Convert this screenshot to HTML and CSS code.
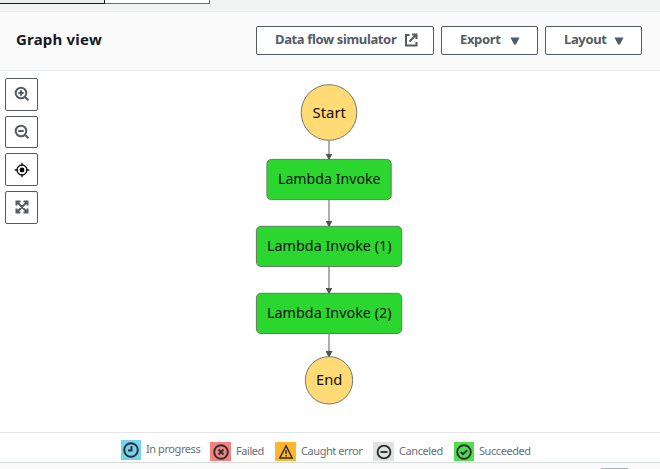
FILE: index.html
```html
<!DOCTYPE html>
<html lang="en">
<head>
<meta charset="utf-8">
<title>Graph view</title>
<link rel="stylesheet" href="styles.css">
</head>
<body>
<div class="tabs"><span class="tab tab-active"></span><span class="tab"></span></div>
<header class="header">
  <h2 class="title">Graph view</h2>
  <div class="actions">
    <button class="btn btn-wide"><span>Data flow simulator</span>
      <svg width="14" height="14" viewBox="0 0 14 14" fill="none" stroke="#545b64" stroke-width="2"><path d="M5.500 2H2v10.500h10.500V9M8 1.500h4.500V6M12.500 1.500 5.500 8.500"/></svg>
    </button>
    <button class="btn"><span>Export</span><svg class="caret" width="10" height="8" viewBox="0 0 10 8"><path d="M.5 .5h9L6 7.500H4z" fill="#545b64"/></svg></button>
    <button class="btn"><span>Layout</span><svg class="caret" width="10" height="8" viewBox="0 0 10 8"><path d="M.5 .5h9L6 7.500H4z" fill="#545b64"/></svg></button>
  </div>
</header>
<main class="canvas">
  <div class="tools">
    <button class="tool"><svg width="16" height="16" viewBox="0 0 16 16" fill="none" stroke="#545b64" stroke-width="2"><circle cx="7" cy="7" r="5.300"/><path d="m10.700 10.700 3.800 3.600M4.300 7h5.400M7 4.300v5.400"/></svg></button>
    <button class="tool"><svg width="16" height="16" viewBox="0 0 16 16" fill="none" stroke="#545b64" stroke-width="2"><circle cx="7" cy="7" r="5.300"/><path d="m10.700 10.700 3.800 3.600M4.300 7h5.400"/></svg></button>
    <button class="tool"><svg width="16" height="16" viewBox="0 0 16 16" fill="none" stroke="#111" stroke-width="1.300"><circle cx="8" cy="8" r="5"/><circle cx="8" cy="8" r="2.400" fill="#000" stroke="none"/><path d="M8 .7V4M8 12v3.300M.7 8H4M12 8h3.300"/></svg></button>
    <button class="tool"><svg width="14" height="14" viewBox="0 0 14 14" fill="none" stroke="#545b64" stroke-width="2"><path d="M5.500 1.500h-4v4M8.500 1.500h4v4M5.500 12.500h-4v-4M8.500 12.500h4v-4M1.500 1.500l11 11M12.500 1.500l-11 11"/></svg></button>
  </div>
  <svg class="graph" width="160" height="340" viewBox="249 80 160 340">
    <defs><marker id="arrow" viewBox="0 0 7 7" refX="6.500" refY="3.500" markerWidth="7" markerHeight="7" markerUnits="userSpaceOnUse" orient="auto"><path d="M0 0 7 3.500 0 7z" fill="#545454"/></marker></defs>
    <g class="edges">
      <path d="M329 141v19"/><path d="M329 200v27"/><path d="M329 267v27"/><path d="M329 334v23.500"/>
    </g>
    <g class="terminal"><circle cx="329" cy="112.500" r="27.800"/><circle cx="329" cy="380.300" r="23.700"/></g>
    <g class="state">
      <rect x="266.900" y="159.400" width="124.300" height="40.200" rx="4.500"/>
      <rect x="256.400" y="226.300" width="145.300" height="40.200" rx="4.500"/>
      <rect x="256.400" y="293.300" width="145.300" height="40.200" rx="4.500"/>
    </g>
    <g class="names">
      <text x="312.500" y="118" textLength="33.500" lengthAdjust="spacingAndGlyphs">Start</text>
      <text x="278" y="184" textLength="102.500" lengthAdjust="spacingAndGlyphs">Lambda Invoke</text>
      <text x="267" y="251" textLength="124.500" lengthAdjust="spacingAndGlyphs">Lambda Invoke (1)</text>
      <text x="267" y="318" textLength="124.500" lengthAdjust="spacingAndGlyphs">Lambda Invoke (2)</text>
      <text x="316" y="385" textLength="26.300" lengthAdjust="spacingAndGlyphs">End</text>
    </g>
  </svg>
</main>
<footer class="legend">
  <span class="item progress"><i class="chip"><svg width="16" height="16" viewBox="0 0 16 16"><circle cx="8" cy="8" r="6.800"/><path d="M8.500 4v4.500H5"/></svg></i><span class="text">In progress</span></span>
  <span class="item failed"><i class="chip"><svg width="16" height="16" viewBox="0 0 16 16"><circle cx="8" cy="8" r="6.800"/><path d="m5.500 5.500 5 5M10.500 5.500l-5 5"/></svg></i><span class="text">Failed</span></span>
  <span class="item caught"><i class="chip"><svg width="16" height="16" viewBox="0 0 16 16"><path d="M8 2 1.800 14h12.400zM8 6v4M8 11v1.500"/></svg></i><span class="text">Caught error</span></span>
  <span class="item canceled"><i class="chip"><svg width="16" height="16" viewBox="0 0 16 16"><circle cx="8" cy="8" r="6.400"/><path d="M4.500 8h7"/></svg></i><span class="text">Canceled</span></span>
  <span class="item succeeded"><i class="chip"><svg width="16" height="16" viewBox="0 0 16 16"><circle cx="8" cy="8" r="6.800"/><path d="m4.700 8 2.300 2.200 4.200-4"/></svg></i><span class="text">Succeeded</span></span>
</footer>
<div class="bottom"><span class="handle"></span></div>
</body>
</html>
```
FILE: styles.css
```css
* { box-sizing: border-box; }
body { margin: 0; width: 660px; height: 469px; overflow: hidden; background: #fff; font-family: "Noto Sans", sans-serif; display: flex; flex-direction: column; }
svg { display: block; flex: none; }
.tabs { height: 11px; background: #f2f3f3; display: flex; flex: none; }
.tab { height: 4px; width: 105px; background: #fff; border: solid #687078; border-width: 0 1px 1px 0; }
.tab-active { background: #eaeded; border-color: #16191f; }
.header { height: 60px; flex: none; background: #fafafa; border: solid #eaeded; border-width: 1px 0; display: flex; align-items: center; justify-content: space-between; padding: 0 18px 2px 16px; }
.title { margin: 0 0 2px; font-size: 15px; line-height: 20px; font-weight: 700; color: #16191f; letter-spacing: .2px; }
.actions { display: flex; gap: 7px; }
.btn { width: 97px; height: 29px; padding: 0 17px 2px 18px; display: flex; align-items: center; justify-content: space-between; background: #fff; border: 1px solid #545b64; border-radius: 2px; color: #545b64; font: 700 13px/17px "Noto Sans", sans-serif; letter-spacing: -.36px; white-space: nowrap; }
.btn-wide { width: 178px; padding: 0 15px 2px 18px; }
.btn-wide svg { margin-top: 2px; }
.caret { margin-top: 3px; }
.canvas { height: 361px; flex: none; display: flex; padding-left: 5px; }
.tools { display: flex; flex-direction: column; gap: 5px; padding-top: 7px; width: 33px; }
.tool { width: 33px; height: 32.700px; padding: 0; display: flex; align-items: center; justify-content: center; background: #fff; border: 1px solid #545b64; border-radius: 2px; }
.graph { margin: 9px 0 0 211px; }
.edges path { stroke: #777; stroke-width: 1.200; marker-end: url(#arrow); }
.terminal circle { fill: #ffda75; stroke: #777; stroke-width: 1; }
.state rect { fill: #2bd62e; stroke: #5f8060; stroke-width: 1; }
.names text { font-size: 14.500px; fill: #111; }
.legend { height: 30px; flex: none; border-top: 1px solid #e4e6e6; display: flex; padding: 7px 0 0 121px; }
.item { display: flex; flex: none; color: #687078; font-size: 11px; line-height: 18px; letter-spacing: -.43px; white-space: nowrap; }
.chip { width: 21px; height: 19px; margin: 2px 5px 0 0; display: flex; align-items: center; justify-content: center; flex: none; }
.chip svg { fill: none; stroke: #2b3030; stroke-width: 1.900; }
.progress { width: 89px; }
.progress .chip { width: 20px; height: 20px; margin-top: 0; background: #75d3f0; }
.failed { width: 65px; }
.failed .chip { background: #f58181; }
.caught { width: 98px; }
.caught .chip { background: #ffb52e; }
.caught svg { stroke-width: 1.500; }
.canceled { width: 81px; }
.canceled .chip { background: #e2e2e2; }
.succeeded .chip { width: 20px; background: #51dc51; }
.item:not(.progress) .text { padding-top: 2px; }
.bottom { height: 7px; flex: none; background: #fafafa; border-top: 1px solid #d5dbdb; display: flex; align-items: flex-end; padding-left: 601px; }
.handle { width: 27px; height: 1px; background: #aab7b8; }
```
